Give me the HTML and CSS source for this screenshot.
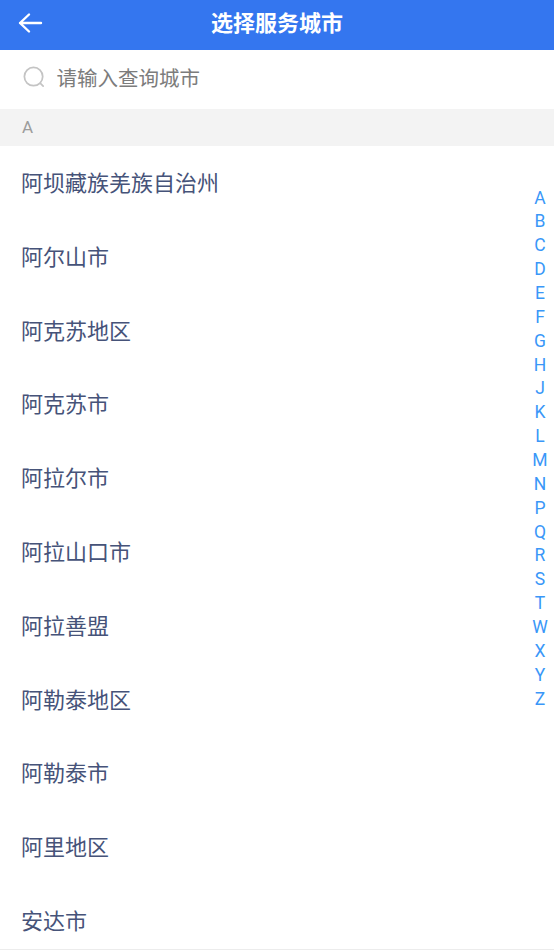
FILE: index.html
```html
<!DOCTYPE html>
<html lang="en">
<head>
  <meta charset="UTF-8">
  <meta name="viewport" content="width=device-width, initial-scale=1.0">
  <title>选择服务城市</title>
  <link rel="stylesheet" href="styles.css">
</head>
<body>

  <div class="header">
    <svg class="back" width="28" height="24" viewBox="0 0 28 24">
      <path d="M25 12H4M13 3.500L4 12l9 8.500" fill="none" stroke="#fff" stroke-width="2.400" stroke-linecap="round" stroke-linejoin="round"/>
    </svg>
    <h1>选择服务城市</h1>
  </div>

  <div class="search">
    <svg width="22" height="22" viewBox="0 0 24 24">
      <circle cx="11.500" cy="11.500" r="10" fill="none" stroke="#c4c4c4" stroke-width="1.900"/>
      <path d="M19 19l3 3" fill="none" stroke="#c4c4c4" stroke-width="1.900" stroke-linecap="round"/>
    </svg>
    <span>请输入查询城市</span>
  </div>

  <div class="section">A</div>

  <ul class="cities">
    <li>阿坝藏族羌族自治州</li>
    <li>阿尔山市</li>
    <li>阿克苏地区</li>
    <li>阿克苏市</li>
    <li>阿拉尔市</li>
    <li>阿拉山口市</li>
    <li>阿拉善盟</li>
    <li>阿勒泰地区</li>
    <li>阿勒泰市</li>
    <li>阿里地区</li>
    <li>安达市</li>
  </ul>

  <!-- Letter index floats over the list -->
  <div class="letters">
    <span>A</span><span>B</span><span>C</span><span>D</span><span>E</span><span>F</span><span>G</span><span>H</span><span>J</span><span>K</span><span>L</span><span>M</span><span>N</span><span>P</span><span>Q</span><span>R</span><span>S</span><span>T</span><span>W</span><span>X</span><span>Y</span><span>Z</span>
  </div>

  <div class="bottom-line"></div>

</body>
</html>
```

FILE: styles.css
```css
html, body {
  margin: 0;
  padding: 0;
  height: 950px;
  overflow: hidden;
}
body {
  font-family: Roboto, "Noto Sans CJK SC", sans-serif;
  background-color: #fff;
  position: relative;
}
.header {
  height: 42px;
  padding-bottom: 8px;
  background-color: #3476ef;
  display: flex;
  align-items: center;
  justify-content: center;
  position: relative;
}
.header h1 {
  margin: 0;
  color: #fff;
  font-size: 22px;
  font-weight: 700;
}
.back {
  position: absolute;
  left: 16px;
  top: 11px;
}
.search {
  height: 54px;
  padding: 0 0 5px 23px;
  display: flex;
  align-items: center;
  gap: 11.500px;
}
.search span {
  color: #7c7c7c;
  font-size: 20.500px;
}
.section {
  height: 37px;
  line-height: 37px;
  padding-left: 22px;
  background-color: #f3f3f3;
  color: #9c9c9c;
  font-size: 17px;
}
.cities {
  list-style: none;
  margin: 0;
  padding: 0;
}
.cities li {
  height: 73.800px;
  line-height: 75.800px;
  padding-left: 21px;
  color: #465379;
  font-size: 22px;
}
.letters {
  position: absolute;
  right: 0;
  top: 186.500px;
  width: 28px;
  display: flex;
  flex-direction: column;
  align-items: center;
  color: #3a97f8;
  font-size: 17.500px;
}
.letters span {
  height: 23.860px;
  line-height: 23.860px;
}
.bottom-line {
  position: absolute;
  left: 0;
  right: 0;
  bottom: 0;
  height: 1px;
  background-color: #ececec;
}
```
